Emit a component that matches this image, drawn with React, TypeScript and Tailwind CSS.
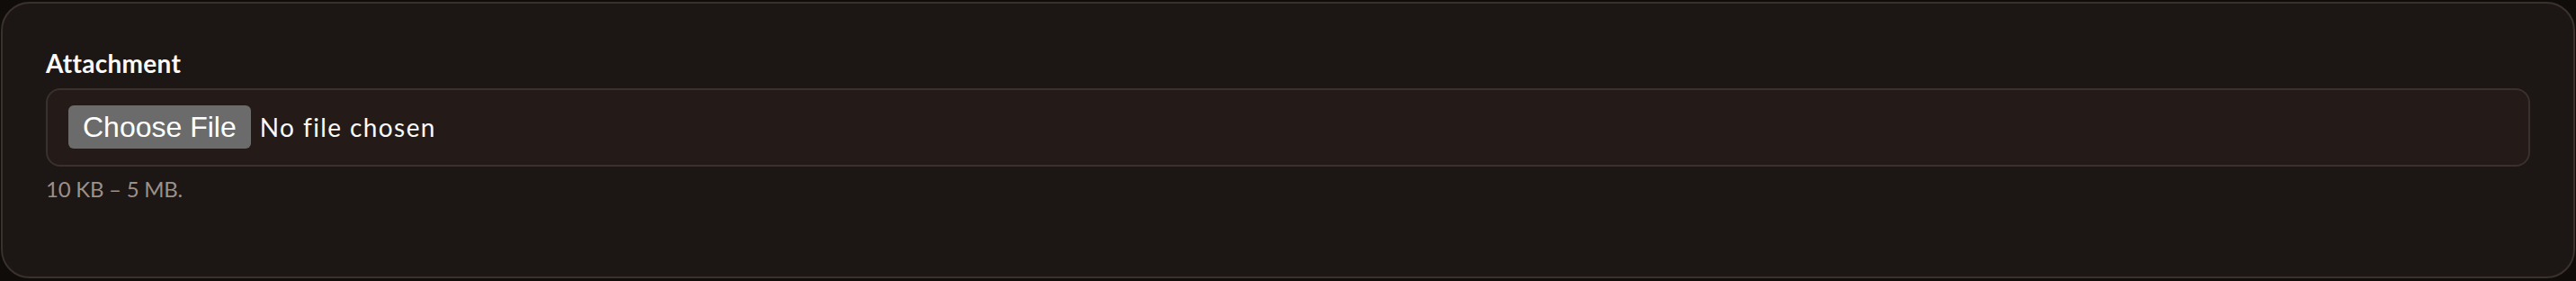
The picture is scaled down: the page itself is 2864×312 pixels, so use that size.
export default function App() {
  return (
    <div className="h-[312px] bg-[#100c0a] px-px pt-[2px] font-['Lato',sans-serif]">
      <div className="h-[307px] rounded-[32px] border-2 border-[#3a312d] bg-[#1c1714] px-[48px] pt-[46px]">
        {/* Field label */}
        <label
          htmlFor="attachment"
          className="block text-[28px] font-bold leading-[40px] tracking-[0.01em] text-[#fafafa]"
        >
          Attachment
        </label>

        {/* File input */}
        <input
          id="attachment"
          type="file"
          className="mt-[8px] block h-[87px] w-full rounded-[16px] border-2 border-[#3a302d] bg-[#241b19] px-[23px] py-[17px] text-[28px] leading-[48px] tracking-[0.05em] text-[#fafafa] file:mr-[10px] file:h-[48px] file:rounded-[6px] file:border-0 file:bg-[#6b6b6b] file:px-[16px] file:font-['Liberation_Sans',sans-serif] file:text-[32px] file:tracking-normal file:text-white"
        />

        <p className="mt-[9px] text-[24px] leading-[32px] tracking-[-0.01em] text-[#9b908a]">10 KB – 5 MB.</p>
      </div>
    </div>
  );
}
